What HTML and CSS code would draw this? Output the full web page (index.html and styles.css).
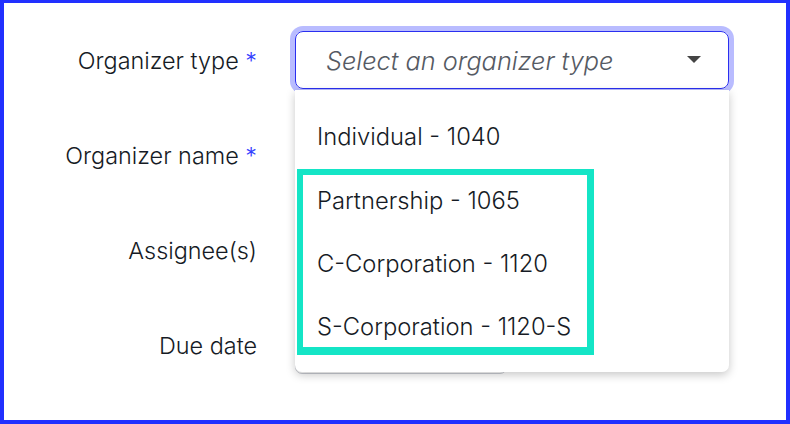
FILE: index.html
```html
<!DOCTYPE html>
<html lang="en">
<head>
<meta charset="UTF-8">
<meta name="viewport" content="width=device-width, initial-scale=1.0">
<title>New organizer</title>
<link rel="stylesheet" href="styles.css">
</head>
<body>
<div class="frame">
    <form class="organizer-form">
        <label class="field-label" for="orgType">Organizer type <span class="req">*</span></label>
        <div class="select-wrap">
            <div class="select-box" id="orgType">
                <span class="placeholder">Select an organizer type</span>
                <span class="caret"></span>
            </div>
            <div class="dropdown-menu">
                <div class="option first">Individual - 1040</div>
                <div class="highlight">
                    <div class="option">Partnership - 1065</div>
                    <div class="option">C-Corporation - 1120</div>
                    <div class="option">S-Corporation - 1120-S</div>
                </div>
            </div>
        </div>

        <label class="field-label" for="orgName">Organizer name <span class="req">*</span></label>
        <div class="text-box" id="orgName"></div>

        <label class="field-label" for="assignees">Assignee(s)</label>
        <div class="text-box" id="assignees"></div>

        <label class="field-label" for="dueDate">Due date</label>
        <div class="text-box date-box" id="dueDate"></div>
    </form>
</div>
</body>
</html>
```

FILE: styles.css
```css
body {
    margin: 0;
    padding: 0;
    font-family: Inter, "Noto Sans", sans-serif;
    font-weight: 360;
    color: #161b25;
    background-color: #fff;
}

.frame {
    box-sizing: border-box;
    width: 790px;
    height: 424px;
    border: 4px solid #2130ff;
    border-top-width: 3px;
    background-color: #fff;
    overflow: hidden;
}

.organizer-form {
    display: grid;
    grid-template-columns: 253px 434px;
    grid-auto-rows: 58px;
    column-gap: 38px;
    row-gap: 37px;
    padding-top: 28px;
}

.field-label {
    justify-self: end;
    align-self: center;
    font-size: 23.4px;
    line-height: 28px;
    margin-top: 2px;
}

.req {
    color: #3340ff;
}

.select-wrap {
    position: relative;
}

.select-box {
    box-sizing: border-box;
    height: 58px;
    display: flex;
    align-items: center;
    justify-content: space-between;
    padding: 0 27px 0 30px;
    border: 1px solid #2a2ff0;
    border-radius: 8px;
    box-shadow: 0 0 0 5px #b9bcff;
}

.placeholder {
    font-size: 25.3px;
    font-style: italic;
    color: #555a63;
    margin-top: 1px;
}

.caret {
    width: 0;
    height: 0;
    border-left: 7px solid transparent;
    border-right: 7px solid transparent;
    border-top: 7px solid #444;
    margin-top: -1px;
}

.dropdown-menu {
    position: absolute;
    top: 59px;
    left: 0;
    width: 434px;
    height: 282px;
    background-color: #fff;
    border-radius: 0 0 7px 7px;
    box-shadow: 0 3px 10px rgba(0, 0, 0, 0.22);
    z-index: 2;
}

.option {
    box-sizing: border-box;
    height: 63px;
    padding: 12px 0 0 14px;
    font-size: 23.75px;
    line-height: 28px;
    white-space: nowrap;
}

.option.first {
    height: 79px;
    padding: 33px 0 0 22px;
}

.highlight {
    box-sizing: border-box;
    width: 297px;
    height: 186px;
    margin-left: 2px;
    border: 6px solid #14e5c6;
    border-right-width: 7px;
    border-bottom-width: 8px;
}

.highlight .option:last-child {
    height: 46px;
}

.text-box {
    box-sizing: border-box;
    border: 1px solid #c9ccd3;
    border-radius: 7px;
}

.date-box {
    width: 212px;
}
```
